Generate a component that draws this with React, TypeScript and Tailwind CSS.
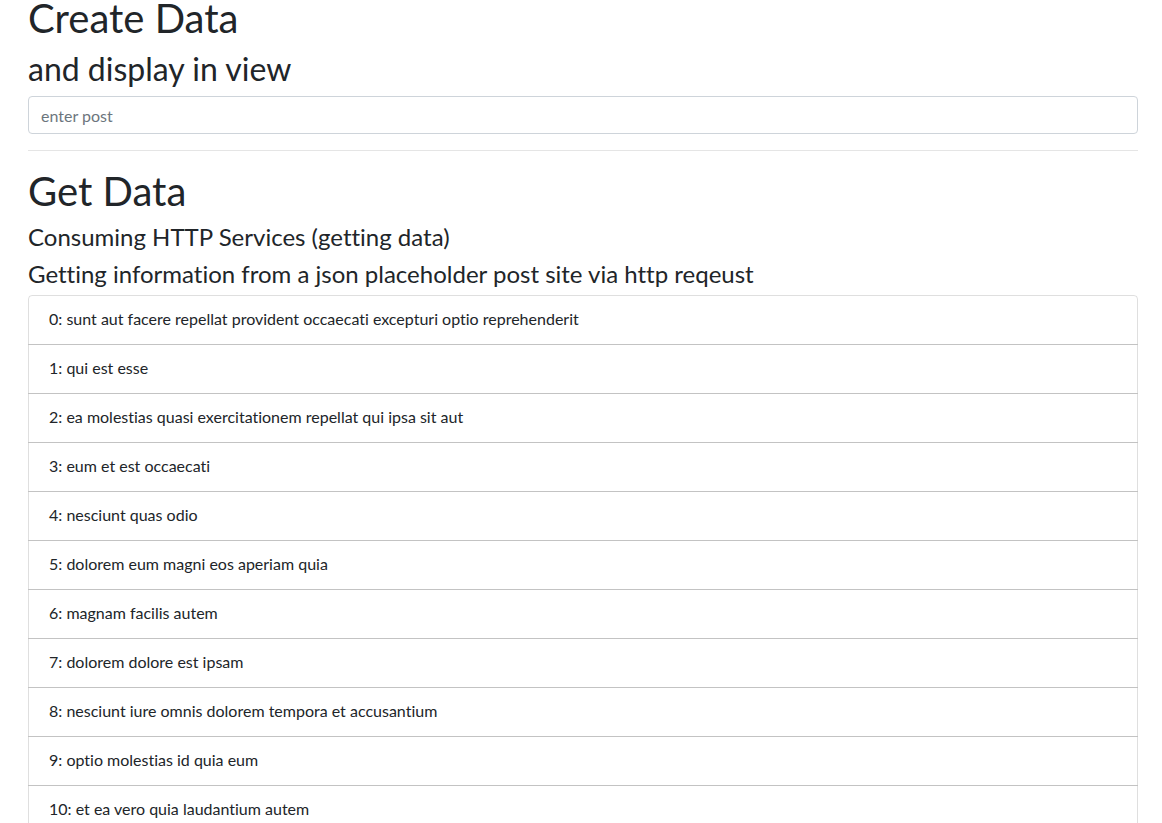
import { useState } from "react";

const posts = [
  "sunt aut facere repellat provident occaecati excepturi optio reprehenderit",
  "qui est esse",
  "ea molestias quasi exercitationem repellat qui ipsa sit aut",
  "eum et est occaecati",
  "nesciunt quas odio",
  "dolorem eum magni eos aperiam quia",
  "magnam facilis autem",
  "dolorem dolore est ipsam",
  "nesciunt iure omnis dolorem tempora et accusantium",
  "optio molestias id quia eum",
  "et ea vero quia laudantium autem",
  "in quibusdam tempore odit est dolorem",
  "dolorum ut in voluptas mollitia et saepe quo animi",
  "voluptatem eligendi optio",
  "eveniet quod temporibus",
];

export default function App() {
  const [post, setPost] = useState("");

  return (
    <div className="min-h-screen bg-white text-[#212529] font-['Lato','Noto_Sans',sans-serif] text-base leading-normal [font-variant-ligatures:none]">
      <div className="w-[1110px] ml-[28px] -mt-[6px]">
        <h1 className="text-[40px] leading-[1.2] font-normal mb-2">Create Data</h1>
        <h2 className="text-[32px] leading-[1.2] font-normal mb-2">and display in view</h2>
        <input
          value={post}
          onChange={(e) => setPost(e.target.value)}
          placeholder="enter post"
          className="block w-full h-[38px] px-3 py-1.5 text-base border border-[#ced4da] rounded-[4px] placeholder:text-[#6c757d] outline-none focus:border-[#80bdff]"
        />
        <hr className="my-4 border-0 border-t border-black/10" />

        <h1 className="text-[40px] leading-[1.2] font-normal mb-2">Get Data</h1>
        <h4 className="text-[24px] leading-[1.2] font-normal mb-2">Consuming HTTP Services (getting data)</h4>
        <h4 className="text-[24px] leading-[1.2] font-normal mb-[6px]">
          Getting information from a json placeholder post site via http reqeust
        </h4>
        <ul className="flex flex-col">
          {posts.map((title, i) => (
            <li
              key={i}
              className="px-5 pt-[11px] pb-[13px] border border-black/[0.125] -mt-px first:mt-0 first:rounded-t-[4px] last:rounded-b-[4px]"
            >
              {i}: {title}
            </li>
          ))}
        </ul>
      </div>
    </div>
  );
}
